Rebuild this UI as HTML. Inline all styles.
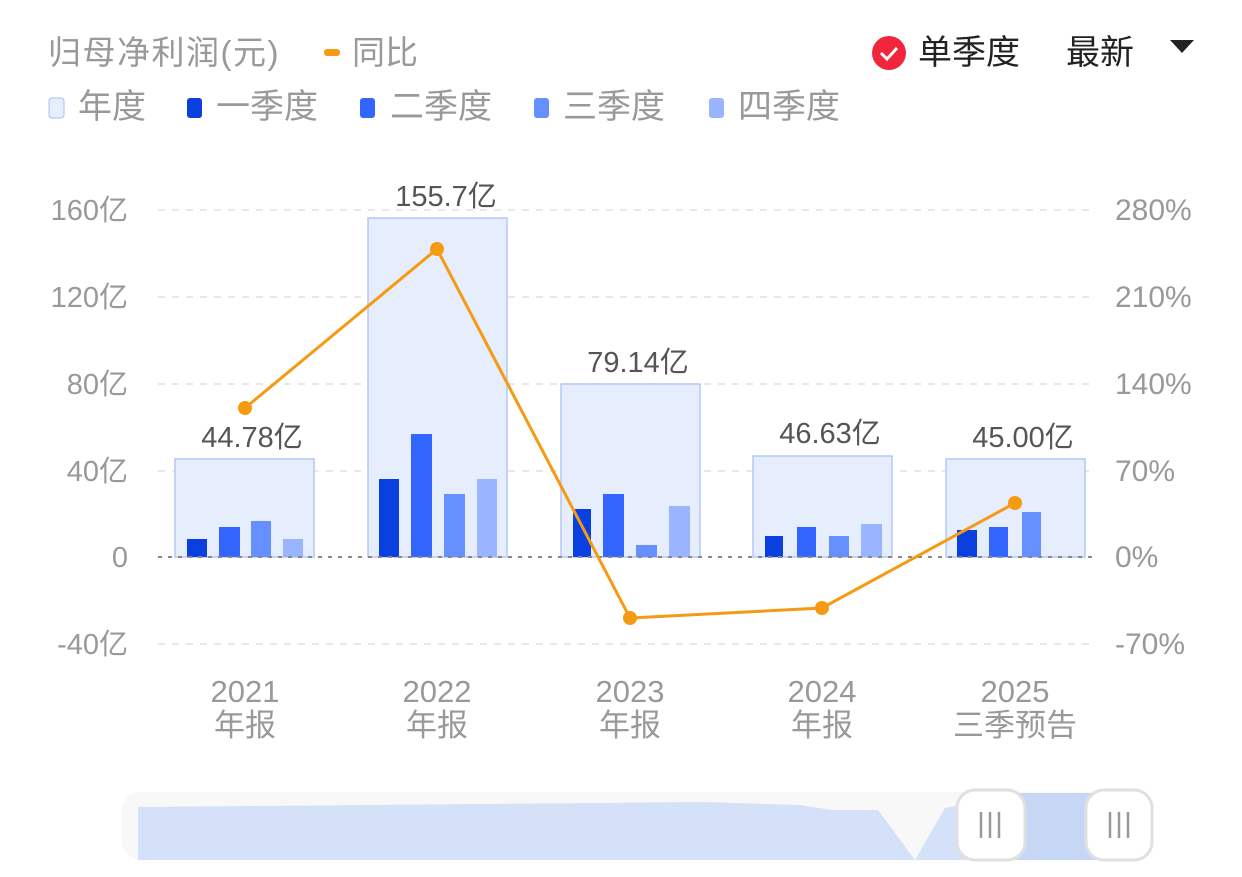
<!DOCTYPE html>
<html><head><meta charset="utf-8"><style>
body{margin:0;width:1242px;height:877px;background:#fff;overflow:hidden;font-family:"Liberation Sans","Noto Sans CJK SC",sans-serif}
</style></head><body>
<svg width="1242" height="877" xmlns="http://www.w3.org/2000/svg" style="position:absolute;left:0;top:0;font-family:'Liberation Sans','Noto Sans CJK SC',sans-serif">
<text x="48" y="64" font-size="33" fill="#999" letter-spacing="1.5">归母净利润(元)</text>
<rect x="324" y="49" width="16" height="7" rx="3" fill="#f59a13"/>
<text x="352" y="64" font-size="33" fill="#999">同比</text>
<circle cx="889" cy="53" r="17" fill="#f0263c"/>
<path d="M881 53 l6 6 l10 -11" stroke="#fff" stroke-width="3" fill="none"/>
<text x="918" y="64" font-size="34" fill="#222">单季度</text>
<text x="1066" y="64" font-size="34" fill="#222">最新</text>
<path d="M1170 40 h24 l-12 13z" fill="#222"/>
<rect x="49" y="98" width="15" height="20" rx="3" fill="#e6edfc" stroke="#a9bff3"/>
<text x="78" y="118" font-size="34" fill="#999">年度</text>
<rect x="187" y="98" width="15" height="20" rx="3" fill="#0a3fe0"/>
<text x="216" y="118" font-size="34" fill="#999">一季度</text>
<rect x="360" y="98" width="15" height="20" rx="3" fill="#3366ff"/>
<text x="390" y="118" font-size="34" fill="#999">二季度</text>
<rect x="534" y="98" width="15" height="20" rx="3" fill="#6690ff"/>
<text x="563" y="118" font-size="34" fill="#999">三季度</text>
<rect x="709" y="98" width="15" height="20" rx="3" fill="#9ab4ff"/>
<text x="738" y="118" font-size="34" fill="#999">四季度</text>
<g stroke="#e8e8e8" stroke-width="2" stroke-dasharray="7,7">
<line x1="158" y1="210" x2="1095" y2="210"/><line x1="158" y1="297" x2="1095" y2="297"/>
<line x1="158" y1="384" x2="1095" y2="384"/><line x1="158" y1="471" x2="1095" y2="471"/>
<line x1="158" y1="644" x2="1095" y2="644"/></g>
<g font-size="29" fill="#999" text-anchor="end">
<text x="128" y="220">160亿</text><text x="128" y="307">120亿</text><text x="128" y="394">80亿</text>
<text x="128" y="481">40亿</text><text x="128" y="567">0</text><text x="128" y="654">-40亿</text></g>
<g font-size="30" fill="#999">
<text x="1115" y="220">280%</text><text x="1115" y="307">210%</text><text x="1115" y="394">140%</text>
<text x="1115" y="481">70%</text><text x="1115" y="567">0%</text><text x="1115" y="654">-70%</text></g>
<g fill="#e6edfc" stroke="#b4c8f5" stroke-width="1.5">
<rect x="175" y="459" width="139" height="98"/><rect x="368" y="218" width="139" height="339"/>
<rect x="561" y="384" width="139" height="173"/><rect x="753" y="456" width="139" height="101"/>
<rect x="946" y="459" width="139" height="98"/></g>
<g fill="#0a3fe0"><rect x="187" y="539" width="20" height="18"/><rect x="379" y="479" width="20" height="78"/><rect x="573" y="509" width="18" height="48"/><rect x="765" y="536" width="18" height="21"/><rect x="957" y="530" width="20" height="27"/></g>
<g fill="#3366ff"><rect x="219" y="527" width="21" height="30"/><rect x="411" y="434" width="21" height="123"/><rect x="603" y="494" width="21" height="63"/><rect x="797" y="527" width="19" height="30"/><rect x="989" y="527" width="19" height="30"/></g>
<g fill="#6690ff"><rect x="251" y="521" width="20" height="36"/><rect x="444" y="494" width="21" height="63"/><rect x="636" y="545" width="21" height="12"/><rect x="829" y="536" width="20" height="21"/><rect x="1022" y="512" width="19" height="45"/></g>
<g fill="#9ab4ff"><rect x="283" y="539" width="20" height="18"/><rect x="477" y="479" width="20" height="78"/><rect x="669" y="506" width="21" height="51"/><rect x="861" y="524" width="21" height="33"/></g>
<line x1="158" y1="557" x2="1095" y2="557" stroke="#888" stroke-width="2" stroke-dasharray="4,6"/>
<g font-size="29" fill="#555" text-anchor="middle">
<text x="252" y="447">44.78亿</text><text x="446" y="206">155.7亿</text><text x="638" y="372">79.14亿</text>
<text x="830" y="443">46.63亿</text><text x="1023" y="447">45.00亿</text></g>
<polyline points="245,408 437,249 630,618 822,608 1015,503" fill="none" stroke="#f59a13" stroke-width="3"/>
<g fill="#f59a13"><circle cx="245" cy="408" r="7"/><circle cx="437" cy="249" r="7"/><circle cx="630" cy="618" r="7"/><circle cx="822" cy="608" r="7"/><circle cx="1015" cy="503" r="7"/></g>
<g font-size="31" fill="#999" text-anchor="middle">
<text x="245" y="702">2021</text><text x="245" y="736">年报</text>
<text x="437" y="702">2022</text><text x="437" y="736">年报</text>
<text x="630" y="702">2023</text><text x="630" y="736">年报</text>
<text x="822" y="702">2024</text><text x="822" y="736">年报</text>
<text x="1015" y="702">2025</text><text x="1015" y="736">三季预告</text></g>
<rect x="122" y="792" width="1030" height="68" rx="18" fill="#f8f8f8"/>
<path d="M138 860 V807 L600 803 L700 802 L800 805 L832 810 L878 810 L915 860 L945 808 L960 805 L1030 795 L1055 802 L1085 805 L1085 860Z" fill="#d5e1f8"/>
<rect x="985" y="793" width="118" height="67" fill="#c6d7f6"/>
<rect x="957" y="790" width="68" height="70" rx="18" fill="#fff" stroke="#e0e0e0" stroke-width="3"/>
<rect x="1086" y="790" width="66" height="70" rx="18" fill="#fff" stroke="#e0e0e0" stroke-width="3"/>
<g stroke="#999" stroke-width="2.5"><line x1="981" y1="812" x2="981" y2="838"/><line x1="990" y1="812" x2="990" y2="838"/><line x1="999" y1="812" x2="999" y2="838"/>
<line x1="1110" y1="812" x2="1110" y2="838"/><line x1="1119" y1="812" x2="1119" y2="838"/><line x1="1128" y1="812" x2="1128" y2="838"/></g>
</svg>
</body></html>
